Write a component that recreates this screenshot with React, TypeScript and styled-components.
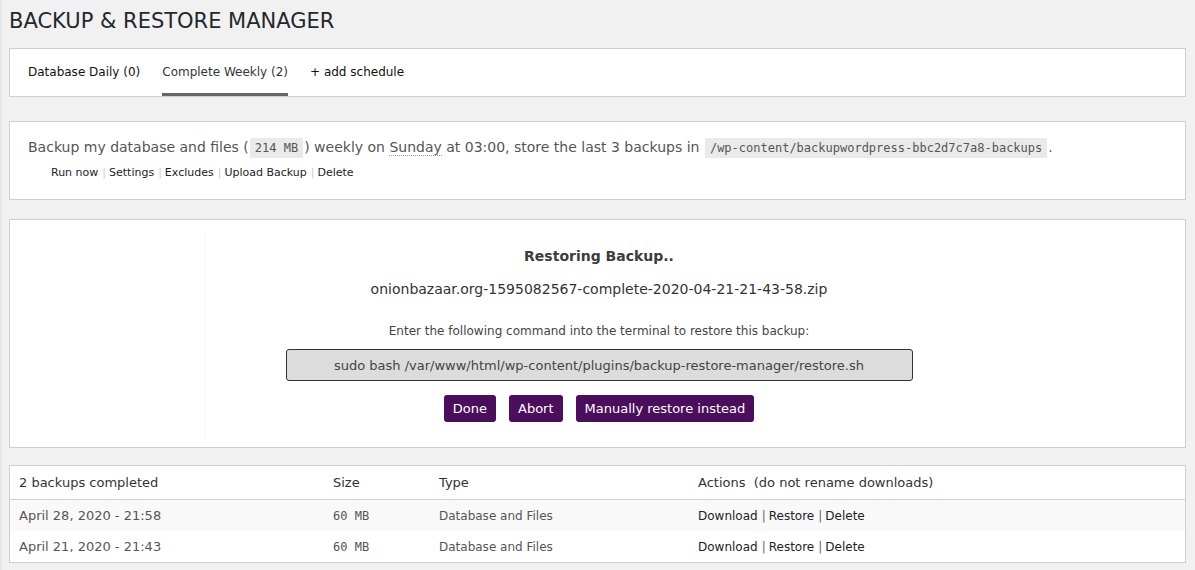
import React from "react";
import styled, { createGlobalStyle } from "styled-components";

const Global = createGlobalStyle`
  html, body { margin: 0; padding: 0; }
  body {
    background: #f1f1f1;
    font-family: "DejaVu Sans", sans-serif;
    color: #444;
    width: 1195px;
    height: 570px;
    overflow: hidden;
  }
`;

const Page = styled.div`
  box-sizing: border-box;
  width: 1195px;
  min-height: 570px;
  border-left: 2px solid #e6e6e6;
  padding: 0 9px 0 7px;
  display: flex;
  flex-direction: column;
`;

const Title = styled.h1`
  margin: 8px 0 0 0;
  font-size: 21px;
  font-weight: 400;
  line-height: 27px;
  color: #23282d;
`;

const Box = styled.div<{ $mt: number }>`
  margin-top: ${(p) => p.$mt}px;
  background: #fff;
  border: 1px solid #ccd0d4;
  box-sizing: border-box;
`;

const TabBar = styled.div`
  display: flex;
  gap: 22px;
  padding: 0 18px;
  height: 47px;
  align-items: stretch;
`;

const Tab = styled.a<{ $active?: boolean }>`
  display: flex;
  align-items: center;
  font-size: 12px;
  color: ${(p) => (p.$active ? "#32373c" : "#111")};
  border-bottom: 3px solid ${(p) => (p.$active ? "#666" : "transparent")};
  padding-top: 1px;
  text-decoration: none;
  cursor: pointer;
`;

const Desc = styled.div`
  padding: 14px 18px 18px;
`;

const DescLine = styled.p`
  margin: 0;
  font-size: 14px;
  line-height: 22px;
  color: #555;
`;

const Code = styled.code`
  font-family: "DejaVu Sans Mono", monospace;
  font-size: 12px;
  background: #eaeaea;
  padding: 3px 5px;
  margin: 0 1px;
`;

const Dotted = styled.span`
  border-bottom: 1px dotted #999;
`;

const Actions = styled.div`
  margin-top: 6px;
  padding-left: 23px;
  font-size: 11px;
  line-height: 16px;
  display: flex;
  align-items: center;
`;

const ActionLink = styled.a`
  color: #1d2327;
  text-decoration: none;
`;

const Sep = styled.span`
  color: #ccc;
  margin: 0 3px 0 4px;
`;

const RestoreGrid = styled.div`
  display: grid;
  grid-template-columns: 194px 788px;
  padding: 13px 0 10px;
  height: 227px;
  box-sizing: border-box;
`;

const RestoreCol = styled.div`
  border-left: 2px solid #fafafa;
  display: flex;
  flex-direction: column;
  align-items: center;
  padding-top: 13px;
`;

const RestoreTitle = styled.div`
  font-size: 14px;
  font-weight: 700;
  color: #3c3c3c;
  line-height: 20px;
`;

const FileName = styled.div`
  margin-top: 13px;
  font-size: 14px;
  color: #333;
  line-height: 20px;
`;

const Instruction = styled.div`
  margin-top: 23px;
  font-size: 12px;
  color: #444;
  line-height: 18px;
`;

const Command = styled.div`
  margin-top: 9px;
  box-sizing: border-box;
  width: 627px;
  height: 32px;
  background: #dcdcdc;
  border: 1px solid #333;
  border-radius: 3px;
  display: flex;
  align-items: center;
  justify-content: center;
  font-size: 13px;
  color: #444;
`;

const Buttons = styled.div`
  margin-top: 14px;
  display: flex;
  gap: 13px;
`;

const Button = styled.button`
  background: #4a0e5c;
  color: #fff;
  border: none;
  border-radius: 3px;
  height: 27px;
  padding: 0 9px;
  font-family: "DejaVu Sans", sans-serif;
  font-size: 13px;
  cursor: pointer;
`;

const Table = styled.table`
  width: 100%;
  border-collapse: collapse;
  font-size: 13px;
`;

const Th = styled.th`
  text-align: left;
  font-weight: 400;
  color: #333;
  height: 33px;
  padding: 0 9px;
  border-bottom: 1px solid #ccd0d4;
`;

const Tr = styled.tr<{ $alt?: boolean }>`
  background: ${(p) => (p.$alt ? "#f9f9f9" : "#fff")};
`;

const Td = styled.td<{ $mono?: boolean; $muted?: boolean }>`
  height: 31px;
  padding: 0 9px;
  color: ${(p) => (p.$muted ? "#555" : "#1d2327")};
  font-family: ${(p) => (p.$mono ? '"DejaVu Sans Mono", monospace' : '"DejaVu Sans", sans-serif')};
  font-size: ${(p) => (p.$mono ? "12px" : "13px")};
`;

const TypeTd = styled(Td)`
  font-size: 12px;
  color: #555;
`;

const ActionTd = styled(Td)`
  font-size: 12px;
`;

const Bar = styled.span`
  color: #666;
  margin: 0 3px 0 4px;
`;

const rows = [
  { date: "April 28, 2020 - 21:58", size: "60 MB", type: "Database and Files" },
  { date: "April 21, 2020 - 21:43", size: "60 MB", type: "Database and Files" },
];

export default function App() {
  return (
    <>
      <Global />
      <Page>
        <Title>BACKUP &amp; RESTORE MANAGER</Title>
        <Box $mt={13}>
          <TabBar>
            <Tab>Database Daily (0)</Tab>
            <Tab $active>Complete Weekly (2)</Tab>
            <Tab>+ add schedule</Tab>
          </TabBar>
        </Box>
        <Box $mt={24}>
          <Desc>
            <DescLine>
              Backup my database and files (<Code>214 MB</Code>) weekly on{" "}
              <Dotted>Sunday</Dotted> at 03:00, store the last 3 backups in{" "}
              <Code>/wp-content/backupwordpress-bbc2d7c7a8-backups</Code>.
            </DescLine>
            <Actions>
              <ActionLink>Run now</ActionLink>
              <Sep>|</Sep>
              <ActionLink>Settings</ActionLink>
              <Sep>|</Sep>
              <ActionLink>Excludes</ActionLink>
              <Sep>|</Sep>
              <ActionLink>Upload Backup</ActionLink>
              <Sep>|</Sep>
              <ActionLink>Delete</ActionLink>
            </Actions>
          </Desc>
        </Box>
        <Box $mt={19}>
          <RestoreGrid>
            <div />
            <RestoreCol>
              <RestoreTitle>Restoring Backup..</RestoreTitle>
              <FileName>onionbazaar.org-1595082567-complete-2020-04-21-21-43-58.zip</FileName>
              <Instruction>Enter the following command into the terminal to restore this backup:</Instruction>
              <Command>sudo bash /var/www/html/wp-content/plugins/backup-restore-manager/restore.sh</Command>
              <Buttons>
                <Button>Done</Button>
                <Button>Abort</Button>
                <Button>Manually restore instead</Button>
              </Buttons>
            </RestoreCol>
          </RestoreGrid>
        </Box>
        <Box $mt={17}>
          <Table>
            <thead>
              <tr>
                <Th style={{ width: 296 }}>2 backups completed</Th>
                <Th style={{ width: 88 }}>Size</Th>
                <Th style={{ width: 241 }}>Type</Th>
                <Th>Actions&nbsp; (do not rename downloads)</Th>
              </tr>
            </thead>
            <tbody>
              {rows.map((r, i) => (
                <Tr key={i} $alt={i === 0}>
                  <Td $muted>{r.date}</Td>
                  <Td $mono $muted>{r.size}</Td>
                  <TypeTd>{r.type}</TypeTd>
                  <ActionTd>
                    <ActionLink>Download</ActionLink>
                    <Bar>|</Bar>
                    <ActionLink>Restore</ActionLink>
                    <Bar>|</Bar>
                    <ActionLink>Delete</ActionLink>
                  </ActionTd>
                </Tr>
              ))}
            </tbody>
          </Table>
        </Box>
      </Page>
    </>
  );
}
